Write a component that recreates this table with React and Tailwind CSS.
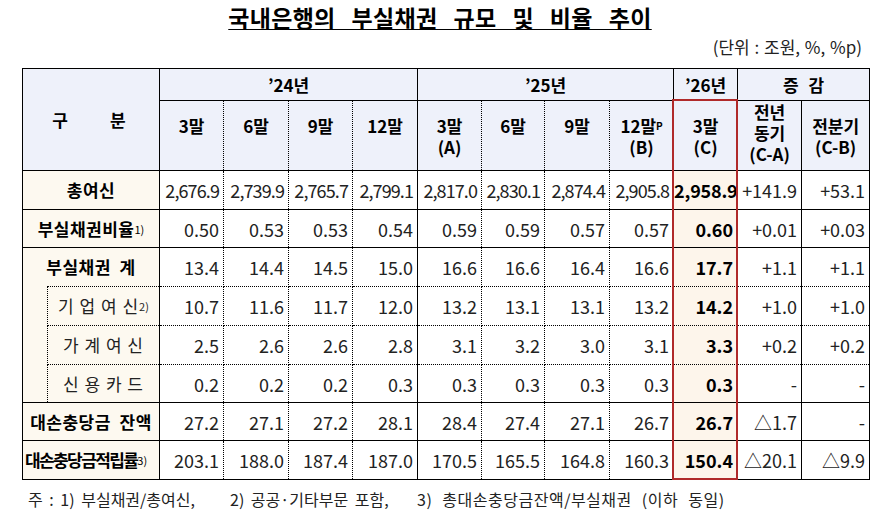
// 국내은행 부실채권 규모 및 비율 추이 표
const hd =
  "border border-dotted border-black bg-[#eef1fa] text-center font-bold text-[17px] leading-[21px] text-black";
const lb =
  "border border-dotted border-black bg-[#fdf9f0] text-center font-bold text-[17px] leading-[22px] text-black";
const sub =
  "border border-dotted border-black bg-[#fdf9f0] text-center text-[17px] leading-[22px] tracking-[1px] text-[#222]";
const num =
  "border border-dotted border-black text-right pr-[4px] text-[18px] leading-[22px] text-[#222]";
const cnum =
  "border border-dotted border-black bg-[#fdf5eb] text-right pr-[4px] text-[18px] leading-[22px] font-bold text-black";

const rows = [
  {
    label: "총여신",
    h: "h-[39px]",
    solid: true,
    tight: true,
    vals: ["2,676.9", "2,739.9", "2,765.7", "2,799.1", "2,817.0", "2,830.1", "2,874.4", "2,905.8"],
    c: "2,958.9",
    d: ["+141.9", "+53.1"]
  },
  {
    label: "부실채권비율",
    sup: "1)",
    h: "h-[38px]",
    solid: true,
    vals: ["0.50", "0.53", "0.53", "0.54", "0.59", "0.59", "0.57", "0.57"],
    c: "0.60",
    d: ["+0.01", "+0.03"]
  },
  {
    label: "부실채권\u00a0\u00a0계",
    h: "h-[39px]",
    vals: ["13.4", "14.4", "14.5", "15.0", "16.6", "16.6", "16.4", "16.6"],
    c: "17.7",
    d: ["+1.1", "+1.1"]
  },
  {
    label: "기 업 여 신",
    sup: "2)",
    child: true,
    first: true,
    h: "h-[39px]",
    vals: ["10.7", "11.6", "11.7", "12.0", "13.2", "13.1", "13.1", "13.2"],
    c: "14.2",
    d: ["+1.0", "+1.0"]
  },
  {
    label: "가 계 여 신",
    child: true,
    h: "h-[39px]",
    vals: ["2.5", "2.6", "2.6", "2.8", "3.1", "3.2", "3.0", "3.1"],
    c: "3.3",
    d: ["+0.2", "+0.2"]
  },
  {
    label: "신 용 카 드",
    child: true,
    h: "h-[38px]",
    solid: true,
    vals: ["0.2", "0.2", "0.2", "0.3", "0.3", "0.3", "0.3", "0.3"],
    c: "0.3",
    d: ["-", "-"]
  },
  {
    label: "대손충당금\u00a0\u00a0잔액",
    h: "h-[38px]",
    solid: true,
    vals: ["27.2", "27.1", "27.2", "28.1", "28.4", "27.4", "27.1", "26.7"],
    c: "26.7",
    d: ["△1.7", "-"]
  },
  {
    label: "대손충당금적립률",
    sup: "3)",
    narrow: true,
    h: "h-[39px]",
    vals: ["203.1", "188.0", "187.4", "187.0", "170.5", "165.5", "164.8", "160.3"],
    c: "150.4",
    d: ["△20.1", "△9.9"]
  }
];

function Sup({ children }) {
  return (
    <sup className="text-[11px] font-normal tracking-normal relative top-[-2px]">
      {children}
    </sup>
  );
}

function Head2({ top, bottom, extra }) {
  return (
    <td className={hd}>
      <div>{top}{extra}</div>
      <div>{bottom || "\u00a0"}</div>
    </td>
  );
}

export default function App() {
  return (
    <div className="w-[874px] h-[513px] bg-white overflow-hidden font-['Noto_Sans_CJK_KR',sans-serif] text-black">
      {/* title */}
      <div className="h-[34px] pl-[6px] text-center text-[23px] font-bold leading-[34px] tracking-[0.3px] [word-spacing:10.5px]">
        <span className="underline decoration-1 underline-offset-[2px]">
          국내은행의 부실채권 규모 및 비율 추이
        </span>
      </div>
      <div className="h-[26px] pr-[12px] text-right text-[17px] leading-[26px] [word-spacing:1px] text-[#222]">
        (단위 : 조원, %, %p)
      </div>

      {/* table */}
      <div className="relative ml-[22px] mt-[8px] w-[847px]">
        <table className="w-[847px] table-fixed border-collapse border border-black">
          <colgroup>
            <col className="w-[25px]" />
            <col className="w-[112px]" />
            <col className="w-[64px] border-l border-black" />
            <col className="w-[65px]" />
            <col className="w-[64px]" />
            <col className="w-[65px]" />
            <col className="w-[64px] border-l border-black" />
            <col className="w-[63px]" />
            <col className="w-[65px]" />
            <col className="w-[64px]" />
            <col className="w-[64px] border-l border-black" />
            <col className="w-[64px] border-l border-black" />
            <col className="w-[68px] border-l border-black" />
          </colgroup>
          <tbody>
            <tr className="h-[32px] border-b border-black">
              <td colSpan={2} rowSpan={2} className={hd}>
                <div className="flex justify-center gap-[42px] pr-[4px]">
                  <span>구</span>
                  <span>분</span>
                </div>
              </td>
              <td colSpan={4} className={hd}>’24년</td>
              <td colSpan={4} className={hd}>’25년</td>
              <td className={hd}>’26년</td>
              <td colSpan={2} className={hd}>
                <div className="flex justify-center gap-[10px]">
                  <span>증</span>
                  <span>감</span>
                </div>
              </td>
            </tr>
            <tr className="h-[69px] border-b border-black">
              <Head2 top="3말" />
              <Head2 top="6말" />
              <Head2 top="9말" />
              <Head2 top="12말" />
              <Head2 top="3말" bottom="(A)" />
              <Head2 top="6말" />
              <Head2 top="9말" />
              <Head2
                top="12말"
                bottom="(B)"
                extra={<sup className="text-[10px] relative top-[-3px]">P</sup>}
              />
              <Head2 top="3말" bottom="(C)" />
              <td className={hd + " leading-[18px] pb-[6px]"}>
                <div>전년</div>
                <div>동기</div>
                <div>(C-A)</div>
              </td>
              <Head2 top="전분기" bottom="(C-B)" />
            </tr>

            {rows.map((r) => (
              <tr key={r.label} className={r.h + (r.solid ? " border-b border-black" : "")}>
                {r.first && (
                  <td rowSpan={3} className="border-0 bg-[#fdf9f0] [border-top-style:hidden]" />
                )}
                {r.child ? (
                  <td className={sub}>
                    {r.label}
                    {r.sup && <Sup>{r.sup}</Sup>}
                  </td>
                ) : (
                  <td
                    colSpan={2}
                    className={
                      lb +
                      (r.narrow
                        ? " text-[16px] tracking-[-1.6px] pl-[2px] text-left"
                        : " tracking-[0.5px]")
                    }
                  >
                    {r.label}
                    {r.sup && <Sup>{r.sup}</Sup>}
                  </td>
                )}
                {r.vals.map((v, i) => (
                  <td key={i} className={num + (r.tight ? " tracking-[-0.9px]" : "")}>
                    {v}
                  </td>
                ))}
                <td className={cnum + (r.tight ? " tracking-[-0.2px]" : "")}>{r.c}</td>
                {r.d.map((v, i) => (
                  <td key={i} className={num}>
                    {v}
                  </td>
                ))}
              </tr>
            ))}
          </tbody>
        </table>
        {/* red highlight frame around the (C) column */}
        <div className="absolute left-[650px] top-[31px] w-[66px] h-[381px] border-2 border-[#b02a2a] pointer-events-none" />
      </div>

      {/* footnote */}
      <div className="mt-[8px] pl-[28px] flex text-[16px] leading-[22px] text-[#222] whitespace-nowrap [word-spacing:3px]">
        <span className="w-[202px]">주 : 1) 부실채권/총여신,</span>
        <span className="w-[187px]">2) 공공·기타부문 포함,</span>
        <span className="[word-spacing:6px] tracking-[0.5px]">3) 총대손충당금잔액/부실채권 (이하 동일)</span>
      </div>
    </div>
  );
}
